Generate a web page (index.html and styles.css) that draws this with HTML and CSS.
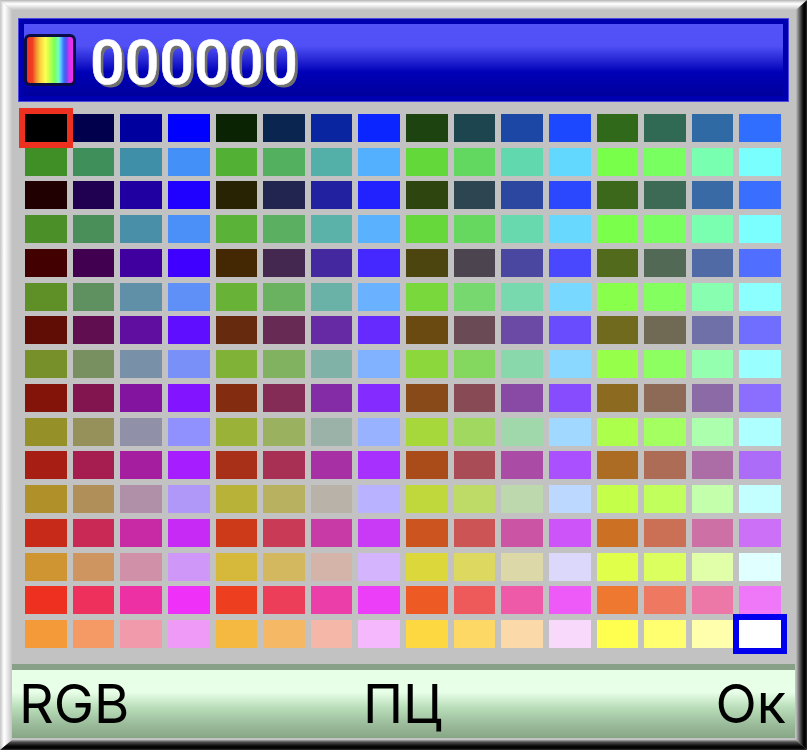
FILE: index.html
```html
<!DOCTYPE html>
<html lang="ru">
<head>
<meta charset="utf-8">
<title>Палитра</title>
<link rel="stylesheet" href="styles.css">
</head>
<body>
<div class="frame">
  <i class="bevel bevel-top"></i>
  <i class="bevel bevel-left"></i>
  <i class="bevel bevel-right"></i>
  <i class="bevel bevel-bottom"></i>
  <header class="title">
    <div class="title-inner">
      <span class="rainbow"></span>
      <span class="value">000000</span>
    </div>
  </header>
  <main class="grid" id="grid"></main>
  <footer class="softkeys">
    <span class="key-left">RGB</span>
    <span class="key-mid">ПЦ</span>
    <span class="key-right">Ок</span>
  </footer>
</div>
<script src="palette.js"></script>
</body>
</html>
```
FILE: styles.css
```css
* { box-sizing: border-box; }
html, body { margin: 0; padding: 0; background: #c0c0c0; }
.frame {
  position: relative;
  width: 807px;
  height: 750px;
  padding: 10px 12px 10px 12px;
  background: #c2c2c2;
  display: flex;
  flex-direction: column;
  overflow: hidden;
  font-family: Roboto, "Noto Sans", sans-serif;
}
.bevel { position: absolute; display: block; }
.bevel-top {
  left: 0; right: 0; top: 0; height: 10px;
  background: linear-gradient(to bottom, #b4b4b4 0, #f4f4f4 3px, #ffffff 4px, #c4c4c4 10px);
  clip-path: polygon(0 0, 100% 0, calc(100% - 11px) 100%, 12px 100%);
}
.bevel-left {
  left: 0; top: 0; bottom: 0; width: 12px;
  background: linear-gradient(to right, #c4c4c4 0, #ffffff 4px, #f4f4f4 6px, #c4c4c4 12px);
  clip-path: polygon(0 0, 100% 10px, 100% calc(100% - 10px), 0 100%);
}
.bevel-right {
  right: 0; top: 0; bottom: 0; width: 11px;
  background: linear-gradient(to right, #c0c0c0 0, #707070 3px, #101010 7px, #000 9px, #2a2a2a 11px);
  clip-path: polygon(0 10px, 100% 0, 100% 100%, 0 calc(100% - 10px));
}
.bevel-bottom {
  left: 0; right: 0; bottom: 0; height: 10px;
  background: linear-gradient(to bottom, #a8a8a8 0, #505050 2px, #080808 6px, #000 8px, #303030 10px);
  clip-path: polygon(12px 0, calc(100% - 11px) 0, 100% 100%, 0 100%);
}
.title {
  flex: none;
  height: 84px;
  margin: 8px 6px 0;
  padding: 5px;
  background: #0000b0;
  border: 1px solid #4a4ae0;
}
.title-inner {
  height: 100%;
  padding: 10px 0 0 0;
  display: flex;
  align-items: flex-start;
  gap: 14px;
  background: linear-gradient(to bottom, #5252f8 0, #5050f6 22px, #2020d0 38px, #0000b8 48px, #00009c 72px);
}
.rainbow {
  flex: none;
  width: 52px;
  height: 52px;
  border: 3px solid #0c0c44;
  border-radius: 6px;
  background: linear-gradient(to right,
    #ee3020 0, #ee4020 12%, #f09030 20%, #fdd840 30%, #ffff50 40%, #c0ff4a 50%,
    #78ff60 60%, #78ffb0 68%, #60d8ff 72%, #4070ff 80%, #4858f0 84%, #9040f0 88%, #dd30e8 92%, #ee30f8 100%);
}
.value {
  font-size: 61px;
  font-weight: 500;
  line-height: 52px;
  margin-top: 3px;
  color: #fff;
  letter-spacing: 0;
  text-shadow: 3px 3px 0 #707070;
  -webkit-text-stroke: 0.6px #fff;
}
.grid {
  flex: none;
  height: 534px;
  margin: 12px 14px 0 13px;
  display: grid;
  grid-template-columns: repeat(16, 1fr);
  grid-template-rows: repeat(16, 1fr);
  gap: 5.72px 6px;
}
.cell { position: relative; }
.cell-red { outline: 6px solid #ee3020; z-index: 1; }
.cell-blue { outline: 6px solid #0000ee; z-index: 1; }
.softkeys {
  flex: none;
  margin-top: 16px;
  height: 74px;
  border-top: 6px solid #88a088;
  padding: 0 9px 0 7px;
  display: grid;
  grid-template-columns: 1fr auto 1fr;
  align-items: center;
  background: linear-gradient(to bottom, #e6ffe6 0, #e8ffe8 22px, #b8dcb8 38px, #98b898 56px, #86a686 68px);
  color: #000;
  font-family: Inter, Roboto, sans-serif;
  font-size: 54px;
  line-height: 68px;
}
.key-right { text-align: right; }
```
FILE: palette.js
```js
var PALETTE = [
"000000 00004d 00009f 0000ff 0a2303 0a2550 0a25a0 0a25ff 1c4310 1c4550 1c47a5 1c48ff 30691a 306a55 2f6aa5 2f6eff",
"3f8f26 3f8f5a 3f8fa8 4290f8 52b035 52b05f 52b0a8 52b0ff 62d83a 62d860 62d8ae 62d8ff 78ff4a 78ff60 78ffb0 7affff",
"200000 200050 2000a0 2000ff 282303 222550 2222a0 2222ff 2e4510 2c4550 2c47a0 2c48ff 3c681c 3c6a55 3a6aa5 3a6eff",
"4a8f28 4a8f5a 4a8fa8 4a90f8 5ab238 5ab060 5ab2a8 5ab2ff 66d83c 66d860 68d8ae 68d8ff 7aff4a 7aff60 7affb0 7cffff",
"420000 420050 4000a0 4000ff 442803 442850 4428a0 4428ff 4c4510 4c4550 4a47a0 4a48ff 526a1c 526a55 506aa5 506eff",
"5f9028 5f905f 5f90a8 5f90f8 68b238 6ab260 6ab2a8 6ab2ff 78d83c 78d870 78d8ae 78d8ff 88ff4a 84ff60 88ffb0 8cffff",
"600e05 600e50 600ea0 600eff 662a0e 662a55 662aa5 662aff 6a4a10 6a4a55 6a4aa5 6a4cff 706a1e 706a55 7070a8 706eff",
"78902a 78905f 7890a8 7890f8 80b238 80b260 80b2a8 80b2ff 8cd83c 84d860 88d8ac 8ad8ff 95ff4a 8eff60 95ffb0 9affff",
"82140a 821450 8214a0 8214ff 842c10 842c55 842ca5 842cff 884a18 884a55 884aa5 884cff 8c6a20 8c6a55 8c6aa5 8c6eff",
"969028 96905a 9090a8 9090ff 9ab238 9ab260 9ab2a8 98b2ff a6d83c a0d860 a0d8ac a0d8ff acff4a a4ff60 acffac aeffff",
"a61e14 a61e50 a61ea0 a61eff a83018 a83055 a830a5 a830ff aa4c1a aa4c55 aa4ca5 aa50ff ac6c24 ac6c55 ac6ca5 ac6cf8",
"b09028 b09058 b090a8 b098f8 b8b238 b8b260 b8b2a8 b8b2ff c0d83c bedb68 bcd8ac bcd8ff c4ff4a c0ff5c c4ffac c4ffff",
"c82a1a c82a55 c82aa5 c82af5 cc3a1a c83a55 c83aa5 c83af5 cc541e cc5455 cc54a5 cc54f8 cc7024 cc7055 cc70a5 cc70f8",
"cf9532 cf9560 cf90a8 cf98f8 d6b83a d4b860 d4b4a8 d4b4fc dcd83c dcd860 dcd8a8 dcd8fc e0ff4a dcff60 e0ffa8 e0ffff",
"ee3020 ee305c ee30a5 ee30f8 ee3e20 ec3e58 ec3ea8 ec3ef8 ee5a24 ee5a5a ee5aa8 ee5af8 ee7830 ee7860 ec78a8 ee78f8",
"f59a38 f59a65 f09aac f09af8 f5b840 f5b865 f5b8a8 f5b8fc fdd840 fdd865 fbd9a8 f8d9fc ffff50 ffff70 ffffac ffffff"
];
var grid = document.getElementById("grid");
PALETTE.forEach(function (row, r) {
  row.split(" ").forEach(function (hex, c) {
    var cell = document.createElement("div");
    cell.className = "cell";
    if (r === 0 && c === 0) cell.className += " cell-red";
    if (r === 15 && c === 15) cell.className += " cell-blue";
    cell.style.background = "#" + hex;
    grid.appendChild(cell);
  });
});
```
